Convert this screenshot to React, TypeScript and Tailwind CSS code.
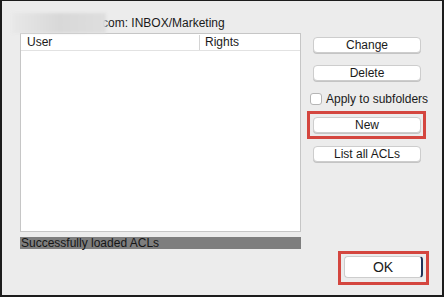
import React from "react";

type BtnProps = { label: string; className?: string };

function MacButton({ label, className = "" }: BtnProps) {
  return (
    <div
      className={`flex items-center justify-center bg-white rounded-[4px] border border-[#cdcdcd] shadow-[0_1px_0_#c4c4c4] text-[12px] leading-none text-[#1a1a1a] ${className}`}
    >
      {label}
    </div>
  );
}

function App() {
  return (
    <div className="w-[444px] h-[297px] bg-[#ececec] border-[#1c1c1c] border-t border-l-2 border-r-2 border-b-2 font-['Liberation_Sans',Arial,sans-serif] text-[12px] text-[#1a1a1a] flex flex-col">
      <div className="flex pl-[18px] pt-[11px]">
        {/* left column */}
        <div className="flex flex-col w-[281px]">
          <div className="flex items-center h-[21px] -ml-[8px]">
            <div className="w-[94px] h-[20px] bg-gradient-to-r from-[#e8e8e8] via-[#d8d8d8] to-[#dedede] blur-[1.5px]" />
            <span className="-ml-[4px] leading-none">com: INBOX/Marketing</span>
          </div>
          <div className="h-[199px] bg-white border border-[#c6c6c6]">
            <div className="flex h-[17px] border-b border-[#e2e2e2] items-center">
              <div className="w-[178px] pl-[6px] leading-none">User</div>
              <div className="h-[15px] border-l border-[#d4d4d4]" />
              <div className="pl-[5px] leading-none">Rights</div>
            </div>
          </div>
          <div className="mt-[5px] h-[12px] bg-[#7e7e7e] pl-[1px] text-[12px] leading-[12px] text-[#161616]">
            Successfully loaded ACLs
          </div>
        </div>
        {/* right column */}
        <div className="flex flex-col ml-[9px] pt-[25px]">
          <MacButton label="Change" className="ml-[3px] w-[108px] h-[16px]" />
          <MacButton label="Delete" className="ml-[3px] mt-[12px] w-[108px] h-[16px]" />
          <div className="flex items-center mt-[12px] h-[12px]">
            <div className="w-[12px] h-[12px] bg-white border border-[#b5b5b5] rounded-[3px]" />
            <span className="ml-[4px] leading-none">Apply to subfolders</span>
          </div>
          <div className="relative ml-[3px] mt-[12px] w-[108px] h-[16px]">
            <MacButton label="New" className="w-full h-full" />
            <div className="absolute -left-[6px] -right-[5px] -top-[6px] -bottom-[6px] border-[3px] border-[#d4463f]" />
          </div>
          <MacButton label="List all ACLs" className="ml-[3px] mt-[13px] w-[108px] h-[16px]" />
        </div>
      </div>
      <div className="flex justify-end pr-[19px] mt-[7px]">
        <div className="relative w-[79px] h-[22px]">
          <div className="flex items-center justify-center w-full h-full bg-white rounded-[4px] border border-[#cdcdcd] border-r-2 border-r-[#1f3358] text-[14px] leading-none">
            OK
          </div>
          <div className="absolute -left-[6px] -right-[6px] -top-[5px] -bottom-[7px] border-[3px] border-[#d4463f]" />
        </div>
      </div>
    </div>
  );
}

export default App;
